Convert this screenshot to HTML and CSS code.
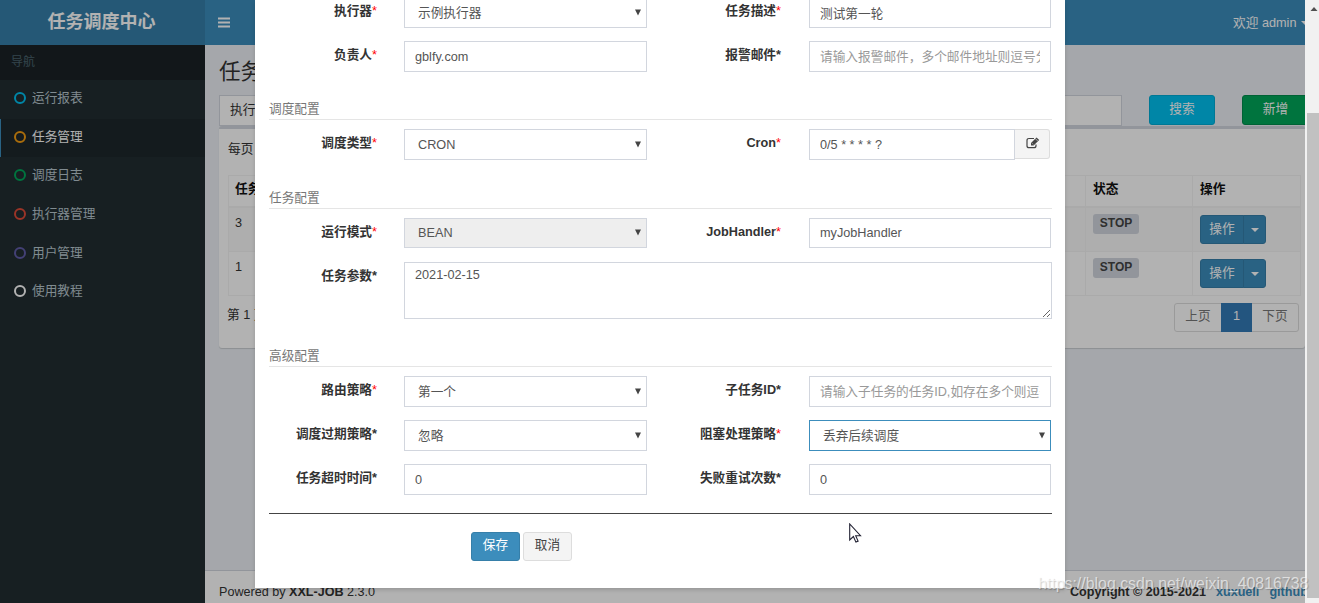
FILE: index.html
```html
<!DOCTYPE html>
<html lang="zh-CN">
<head>
<meta charset="utf-8">
<title>任务调度中心</title>
<link rel="stylesheet" href="styles.css">
</head>
<body>
<div class="app">
  <header class="topbar">
    <div class="logo">任务调度中心</div>
    <nav class="navbar">
      <svg class="menu-icon" width="12" height="11" viewBox="0 0 12 11"><path d="M0 1.5h12M0 5.5h12M0 9.5h12" stroke="#fff" stroke-width="2"/></svg>
      <div class="user">欢迎 admin <i class="caret"></i></div>
    </nav>
  </header>
  <aside class="sidebar">
    <div class="side-head">导航</div>
    <a class="side-item"><i class="ring aqua"></i>运行报表</a>
    <a class="side-item active"><i class="ring yellow"></i>任务管理</a>
    <a class="side-item"><i class="ring green"></i>调度日志</a>
    <a class="side-item"><i class="ring red"></i>执行器管理</a>
    <a class="side-item"><i class="ring purple"></i>用户管理</a>
    <a class="side-item"><i class="ring white"></i>使用教程</a>
  </aside>
  <main class="content">
    <h1>任务管理</h1>
    <div class="filters">
      <div class="group">执行器</div>
      <button class="btn info">搜索</button>
      <button class="btn success">新增</button>
    </div>
    <section class="box">
      <div class="length">每页 10 条记录</div>
      <div class="table">
        <div class="tr th"><div>任务ID</div><div>状态</div><div>操作</div></div>
        <div class="tr odd"><div>3</div><div><span class="stop">STOP</span></div><div class="ops"><span class="op">操作</span><span class="op drop"><i class="caret"></i></span></div></div>
        <div class="tr"><div>1</div><div><span class="stop">STOP</span></div><div class="ops"><span class="op">操作</span><span class="op drop"><i class="caret"></i></span></div></div>
      </div>
      <div class="table-foot">
        <span>第 1 页</span>
        <div class="pages"><span>上页</span><span class="current">1</span><span>下页</span></div>
      </div>
    </section>
  </main>
  <footer class="footer">
    <div>Powered by <b>XXL-JOB</b> 2.3.0</div>
    <div class="copy"><b>Copyright © 2015-2021</b><a>xuxueli</a><a>github</a></div>
  </footer>
</div>
<div class="backdrop"></div>
<div class="modal">
  <div class="form">
    <div class="row">
      <label>执行器<em>*</em></label><div class="control select">示例执行器<svg class="arrow" viewBox="0 0 6 6"><path d="M0 0h6L3 6z"/></svg></div>
      <label>任务描述<em>*</em></label><input class="control" value="测试第一轮">
    </div>
    <div class="row">
      <label>负责人<em>*</em></label><input class="control" value="gblfy.com">
      <label>报警邮件<s>*</s></label><input class="control" placeholder="请输入报警邮件，多个邮件地址则逗号分隔">
    </div>
    <div class="section">调度配置</div>
    <div class="row">
      <label>调度类型<em>*</em></label><div class="control select">CRON<svg class="arrow" viewBox="0 0 6 6"><path d="M0 0h6L3 6z"/></svg></div>
      <label>Cron<em>*</em></label>
      <div class="cron"><input class="control" value="0/5 * * * * ?"><button class="edit"><svg width="14" height="12" viewBox="0 0 14 12" fill="none" stroke="#444"><path d="M8 1.5H3Q1 1.5 1 3.5v5.200q0 2 2 2h5q2 0 2-2V7.500" stroke-width="1.200"/><path d="M5 8.500V6L10.500.4l2.700 2.700L7.600 8.500z" fill="#444" stroke="none"/><path d="M6.200 6.300l1 1M9.300 1.600l2.600 2.600" stroke="#f4f4f4" stroke-width=".6"/></svg></button></div>
    </div>
    <div class="section tall">任务配置</div>
    <div class="row short">
      <label>运行模式<em>*</em></label><div class="control select disabled">BEAN<svg class="arrow" viewBox="0 0 6 6"><path d="M0 0h6L3 6z"/></svg></div>
      <label>JobHandler<em>*</em></label><input class="control" value="myJobHandler">
    </div>
    <div class="row">
      <label>任务参数<s>*</s></label><textarea class="control area">2021-02-15</textarea>
    </div>
    <div class="section">高级配置</div>
    <div class="row">
      <label>路由策略<em>*</em></label><div class="control select">第一个<svg class="arrow" viewBox="0 0 6 6"><path d="M0 0h6L3 6z"/></svg></div>
      <label>子任务ID<s>*</s></label><input class="control" placeholder="请输入子任务的任务ID,如存在多个则逗号分隔">
    </div>
    <div class="row">
      <label>调度过期策略<s>*</s></label><div class="control select">忽略<svg class="arrow" viewBox="0 0 6 6"><path d="M0 0h6L3 6z"/></svg></div>
      <label>阻塞处理策略<em>*</em></label><div class="control select focus">丢弃后续调度<svg class="arrow" viewBox="0 0 6 6"><path d="M0 0h6L3 6z"/></svg></div>
    </div>
    <div class="row">
      <label>任务超时时间<s>*</s></label><input class="control" value="0">
      <label>失败重试次数<s>*</s></label><input class="control" value="0">
    </div>
    <div class="actions"><button class="btn primary">保存</button><button class="btn default">取消</button></div>
  </div>
</div>
<div class="scrollbar"><svg width="14" height="17" viewBox="0 0 14 17"><path d="M5.500 11h7L9 7z" fill="#505050"/></svg><div class="thumb"></div></div>
<svg class="cursor" width="13" height="20" viewBox="0 0 13 20"><path d="M.7 1v16l3.700-3.500 2.500 5.600 2.200-1-2.400-5.400h4.800z" fill="#fff" stroke="#223" stroke-width="1.100"/></svg>
<div class="watermark">https://blog.csdn.net/weixin_40816738</div>
</body>
</html>
```
FILE: styles.css
```css
* { box-sizing: border-box; }
body {
  margin: 0;
  height: 603px;
  overflow: hidden;
  position: relative;
  font: 12.700px/18px "Liberation Sans", "Noto Sans CJK SC", sans-serif;
  color: #333;
}
input, textarea, button { font: inherit; margin: 0; outline: none; }
em, s, i { font-style: normal; text-decoration: none; }

.app {
  width: 1305px;
  height: 603px;
  overflow: hidden;
  display: grid;
  grid-template: 45px 525px 33px / 205px 1100px;
}
.topbar { grid-column: 1 / 3; display: flex; color: #fff; }
.logo {
  width: 205px;
  background: #367fa9;
  font-size: 18px;
  font-weight: bold;
  line-height: 45px;
  padding-right: 2px;
  text-align: center;
}
.navbar {
  flex: 1;
  background: #3c8dbc;
  display: flex;
  align-items: center;
  justify-content: space-between;
  padding-left: 13px;
  overflow: hidden;
}
.user { white-space: nowrap; margin-right: -4px; }
.caret {
  display: inline-block;
  vertical-align: middle;
  margin-left: 1px;
  border: 4px solid transparent;
  border-top-color: currentColor;
  border-bottom: 0;
}

.sidebar { grid-row: 2 / 4; background: #222d32; }
.side-head { height: 35px; padding: 0 11px; line-height: 34px; font-size: 12px; background: #1a2226; color: #4b646f; }
.side-item {
  display: flex;
  align-items: center;
  height: 38.600px;
  padding: 0 0 2px 13px;
  border-left: 1px solid transparent;
  color: #b8c7ce;
}
.side-item.active { background: #1e282c; border-left-color: #3c8dbc; color: #fff; }
.ring { width: 12px; height: 12px; margin: 0 6px 0 0; border: 2px solid; border-radius: 50%; }
.aqua { color: #00c0ef; }
.yellow { color: #f39c12; }
.green { color: #00a65a; }
.red { color: #dd4b39; }
.purple { color: #605ca8; }
.white { color: #fff; }

.content { background: #ecf0f5; padding-left: 14px; overflow: hidden; }
h1 { margin: 0; height: 50px; line-height: 53px; font-size: 21.600px; font-weight: normal; }
.filters { display: flex; height: 31px; align-items: flex-start; }
.group { flex: none; width: 903px; height: 31px; margin-right: 27px; padding-left: 10px; line-height: 28px; background: #fff; border: 1px solid #d2d6de; }
.btn { flex: none; height: 30px; padding: 0 0 3px; border: 1px solid; border-radius: 3px; color: #fff; }
.info { width: 66px; margin-right: 27px; background: #00c0ef; border-color: #00acd6; }
.success { width: 67px; background: #00a65a; border-color: #008d4c; }
.box { height: 222px; padding-left: 9px; background: #fff; border-top: 3px solid #d2d6de; border-radius: 3px; box-shadow: 0 1px 1px rgba(0, 0, 0, .15); }
.length { height: 46px; padding-top: 11px; }
.table { width: 1073px; border: 1px solid #f4f4f4; }
.tr { display: grid; grid-template-columns: 857px 107px 1fr; height: 44px; border-bottom: 1px solid #f4f4f4; }
.tr:last-child { height: 43px; border-bottom: 0; }
.tr > div { padding: 6px 6px 0; border-right: 1px solid #f4f4f4; }
.tr > div:nth-child(n+2) { padding-left: 7px; }
.tr > div:last-child { border-right: 0; }
.tr.th { height: 32px; border-bottom-width: 2px; font-weight: bold; color: #111; }
.tr.th > div { padding-top: 4px; }
.odd { background: #f9f9f9; }
.stop { display: block; width: 46px; height: 20px; border-radius: 3px; background: #d2d6de; color: #444; font-weight: bold; font-size: 12px; line-height: 19px; text-align: center; }
.tr > .ops { display: flex; padding-top: 7px; }
.op { width: 44px; height: 29px; padding-bottom: 2px; line-height: 27px; text-align: center; color: #fff; background: #3c8dbc; border: 1px solid #367fa9; border-radius: 3px 0 0 3px; }
.drop { width: 23px; margin-left: -1px; border-radius: 0 3px 3px 0; line-height: 27px; }
.table-foot { display: flex; justify-content: space-between; width: 1071px; margin-left: -1px; padding-top: 7px; line-height: 25px; }
.pages { display: flex; height: 29px; margin-right: -1px; line-height: 25px; text-align: center; color: #777; border: 1px solid #ddd; border-radius: 3px; }
.pages span { width: 46px; }
.pages .current { width: 31px; height: 29px; margin-top: -1px; line-height: 27px; color: #fff; background: #337ab7; }
.footer { display: flex; justify-content: space-between; padding: 11px 0 0 14px; line-height: 20px; background: #fff; border-top: 1px solid #d2d6de; overflow: hidden; white-space: nowrap; font-size: 12.600px; }
.copy { width: 235px; display: flex; gap: 10px; font-weight: bold; }
.copy a { color: #3c8dbc; }

.backdrop { position: absolute; inset: 0 14px 0 0; background: rgba(0, 0, 0, .3); }
.modal {
  position: absolute;
  left: 255px;
  top: 0;
  width: 810px;
  height: 588px;
  overflow: hidden;
  background: #fff;
  box-shadow: 0 2px 4px rgba(0, 0, 0, .15);
}
.form { padding: 0 13px 0 14px; margin-top: -3px; }
.row {
  display: grid;
  grid-template-columns: 108px 243px 107px 242px;
  column-gap: 27px;
  margin-bottom: 13px;
}
.row > :nth-child(4) { margin-left: 1px; margin-right: -1px; }
label { font-weight: bold; text-align: right; line-height: 29px; white-space: nowrap; }
label em { color: #f00; font-weight: normal; }
.control {
  width: 100%;
  height: 31px;
  padding: 0 10px;
  border: 1px solid #d2d6de;
  border-radius: 0;
  background: #fff;
  color: #555;
}
.control::placeholder { color: #999; }
.row > input:nth-child(4), .row > .select:nth-child(4) { width: 242px; }
.short { margin-bottom: 14px; }
.short .control { height: 30px; }
.select { display: flex; justify-content: space-between; align-items: center; padding: 0 5px 0 13px; }
.disabled { background: #eee; }
.focus { border-color: #3c8dbc; }
.arrow { width: 6px; height: 7px; margin-bottom: 1px; fill: #444; }
.cron { display: flex; width: 241px; }
.cron input { width: 206px; }
.edit { width: 35px; height: 30px; padding: 2px 0 0 1px; border: 1px solid #ddd; border-left: 0; border-radius: 0 3px 3px 0; background: #f4f4f4; }
.section { height: 35px; margin: 13px 0 9px; padding-top: 14px; line-height: 20px; color: #777; border-bottom: 1px solid #e5e5e5; }
.tall { height: 36px; padding-top: 15px; }
.area { grid-column: 2 / 5; width: 648px; height: 57px; padding: 3px 10px; resize: both; display: block; }
.row > .area { margin: 0; }
.actions { display: flex; gap: 3px; margin-top: 18px; padding: 18px 0 0 202px; border-top: 1px solid #444; }
.actions .btn { width: 49px; height: 29px; }
.primary { background: #3c8dbc; border-color: #367fa9; }
.default { background: #f4f4f4; border-color: #ddd; color: #444; }

.scrollbar { position: absolute; right: 0; top: 0; width: 14px; height: 603px; background: #f1f1f1; }
.scrollbar svg { display: block; }
.thumb { margin: 96px 0 0 2px; height: 485px; background: #c1c1c1; }
.cursor { position: absolute; left: 849px; top: 523px; }
.watermark { position: absolute; left: 1038px; top: 574px; font-size: 15.900px; line-height: 20px; color: rgba(255, 255, 255, .62); text-shadow: 1px 1px 1px rgba(0, 0, 0, .2); white-space: nowrap; }
```
